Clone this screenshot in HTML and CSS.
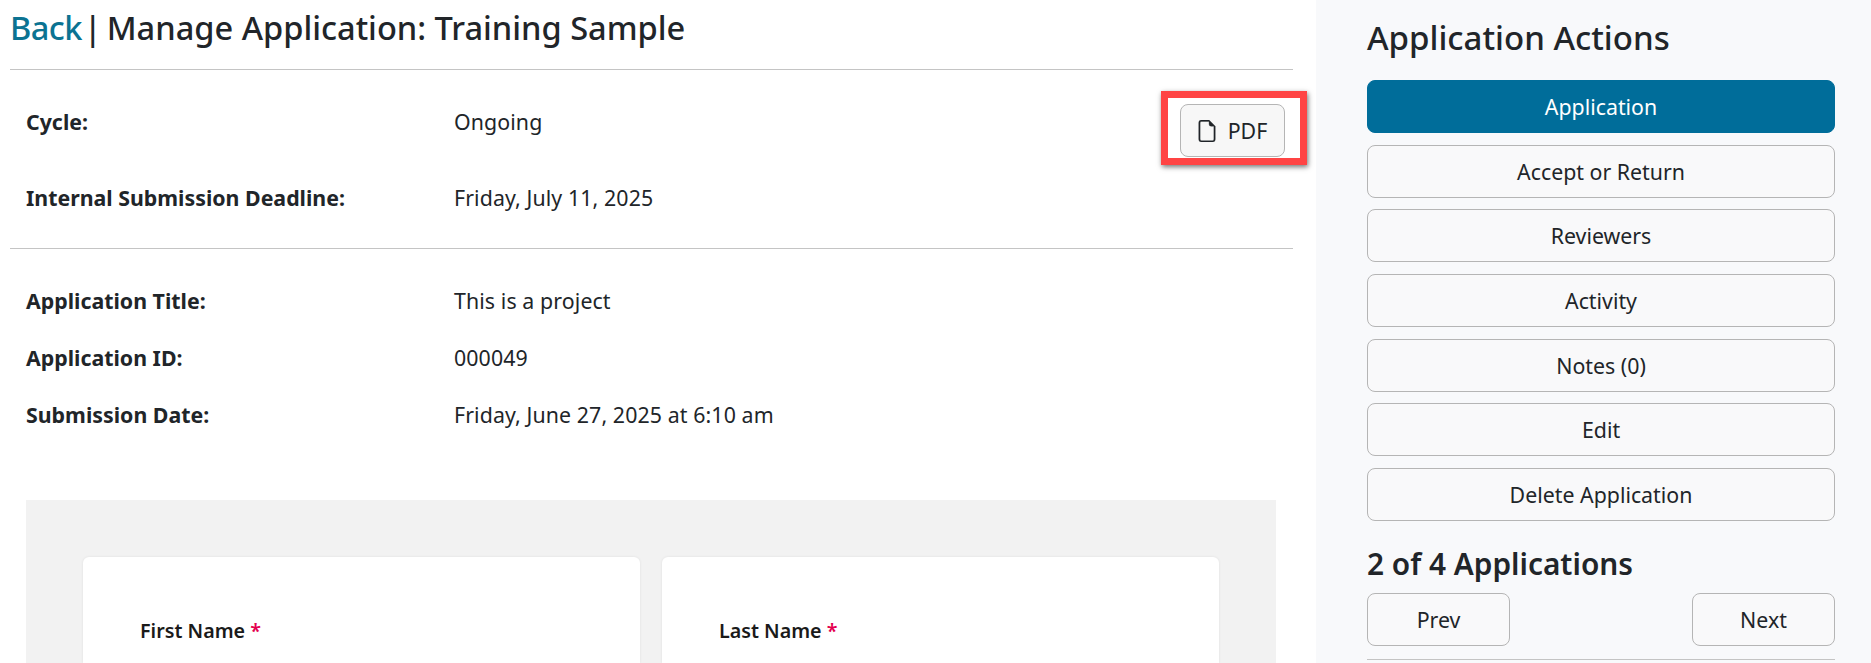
FILE: index.html
```html
<!DOCTYPE html>
<html lang="en">
<head>
<meta charset="utf-8">
<title>Manage Application: Training Sample</title>
<link rel="stylesheet" href="styles.css">
</head>
<body>
<div class="page">
  <main class="main">
    <h1 class="title"><a class="back" href="#">Back</a><span class="sep">|</span>Manage Application: Training Sample</h1>
    <hr class="rule">
    <section class="meta">
      <dl class="rows rows-top">
        <dt>Cycle:</dt><dd>Ongoing</dd>
        <dt>Internal Submission Deadline:</dt><dd>Friday, July 11, 2025</dd>
      </dl>
      <div class="pdf-wrap">
        <button class="btn pdf" type="button">
          <svg class="file-icon" viewBox="0 0 16 16" fill="currentColor" aria-hidden="true"><path d="M14 4.5V14a2 2 0 0 1-2 2H4a2 2 0 0 1-2-2V2a2 2 0 0 1 2-2h5.5L14 4.5zm-3 0A1.5 1.5 0 0 1 9.5 3V1H4a1 1 0 0 0-1 1v12a1 1 0 0 0 1 1h8a1 1 0 0 0 1-1V4.5h-2z"/></svg>
          PDF
        </button>
      </div>
    </section>
    <hr class="rule">
    <dl class="rows rows-app">
      <dt>Application Title:</dt><dd>This is a project</dd>
      <dt>Application ID:</dt><dd>000049</dd>
      <dt>Submission Date:</dt><dd>Friday, June 27, 2025 at 6:10 am</dd>
    </dl>
    <section class="form-panel">
      <div class="card"><label class="field-label">First Name <span class="req">*</span></label></div>
      <div class="card"><label class="field-label">Last Name <span class="req">*</span></label></div>
    </section>
  </main>
  <aside class="side">
    <h2 class="side-title">Application Actions</h2>
    <nav class="actions">
      <a class="btn action active" href="#">Application</a>
      <a class="btn action" href="#">Accept or Return</a>
      <a class="btn action" href="#">Reviewers</a>
      <a class="btn action" href="#">Activity</a>
      <a class="btn action" href="#">Notes (0)</a>
      <a class="btn action" href="#">Edit</a>
      <a class="btn action" href="#">Delete Application</a>
    </nav>
    <h2 class="side-count">2 of 4 Applications</h2>
    <div class="pager">
      <a class="btn action pager-btn" href="#">Prev</a>
      <a class="btn action pager-btn" href="#">Next</a>
    </div>
    <hr class="rule side-rule">
  </aside>
</div>
</body>
</html>
```
FILE: styles.css
```css
* { box-sizing: border-box; }
html, body { margin: 0; height: 100%; overflow: hidden; }
body {
  font-family: "Noto Sans", "Open Sans", sans-serif;
  font-size: 21.33px;
  color: #212529;
  background: #fff;
}
.page { display: flex; height: 663px; overflow: hidden; }
.main { width: 1316px; flex: none; padding: 0 23px 0 10px; }
.title {
  margin: 0;
  height: 69px;
  padding-top: 6px;
  font-size: 32.6px;
  line-height: 44px;
  font-weight: 500;
  color: #212529;
}
.back { color: #0b7392; text-decoration: none; letter-spacing: -0.6px; }
.sep { margin: 0 5px 0 2px; }
.rule { margin: 0; border: 0; border-top: 1px solid #c4c4c4; }
.meta { display: flex; justify-content: space-between; height: 178px; }
.rows { margin: 0; display: grid; grid-template-columns: 428px 1fr; padding-left: 16px; }
.rows dt { font-weight: 700; }
.rows dd { margin: 0; letter-spacing: .1px; }
.rows-top { padding-top: 37px; row-gap: 48px; grid-auto-rows: 28px; align-content: start; }
.rows-app { padding-top: 37px; row-gap: 29px; grid-auto-rows: 28px; height: 251px; }
.btn {
  font-family: inherit;
  font-size: 21.33px;
  color: #212529;
  background: #f9f9fa;
  border: 1px solid #b5b5b5;
  border-radius: 8px;
}
.pdf-wrap {
  align-self: flex-start;
  margin-top: 21px;
  margin-right: -14px;
  border: 7px solid #ff4444;
  box-shadow: 1px 2px 5px rgba(0, 0, 0, .55);
  padding: 6px 15px 1px 12px;
  display: flex;
}
.pdf {
  width: 105px;
  height: 53px;
  padding: 0 2px 0 0;
  display: flex;
  align-items: center;
  justify-content: center;
  gap: 10px;
  background: #f7f7f7;
}
.file-icon { width: 22px; height: 22px; flex: none; stroke: currentColor; stroke-width: .25; }
.form-panel {
  margin-left: 16px;
  margin-right: 17px;
  height: 163px;
  background: #f2f2f2;
  padding: 57px 57px 0;
  display: grid;
  grid-template-columns: 557px 557px;
  justify-content: space-between;
}
.card {
  background: #fff;
  border-radius: 6px 6px 0 0;
  box-shadow: 0 0 3px rgba(0, 0, 0, .08);
  padding: 58px 57px 0;
}
.field-label { font-size: 19.7px; line-height: 27px; font-weight: 600; color: #1a1a1a; }
.req { color: #e4004f; }
.side { flex: 1; background: #f8f9fb; padding: 0 36px 0 51px; }
.side-title {
  margin: 0;
  height: 80px;
  padding-top: 16px;
  font-size: 33px;
  line-height: 44px;
  font-weight: 500;
}
.actions { display: flex; flex-direction: column; gap: 11.67px; }
.action {
  display: flex;
  height: 53px;
  align-items: center;
  justify-content: center;
  text-decoration: none;
}
.active { background: #006d9a; border-color: #006d9a; color: #fff; }
.side-count {
  margin: 0;
  height: 72px;
  padding-top: 23px;
  font-size: 29.8px;
  line-height: 40px;
  font-weight: 600;
}
.pager { display: flex; justify-content: space-between; }
.pager-btn { width: 143px; }
.side-rule { margin-top: 13px; }
```
